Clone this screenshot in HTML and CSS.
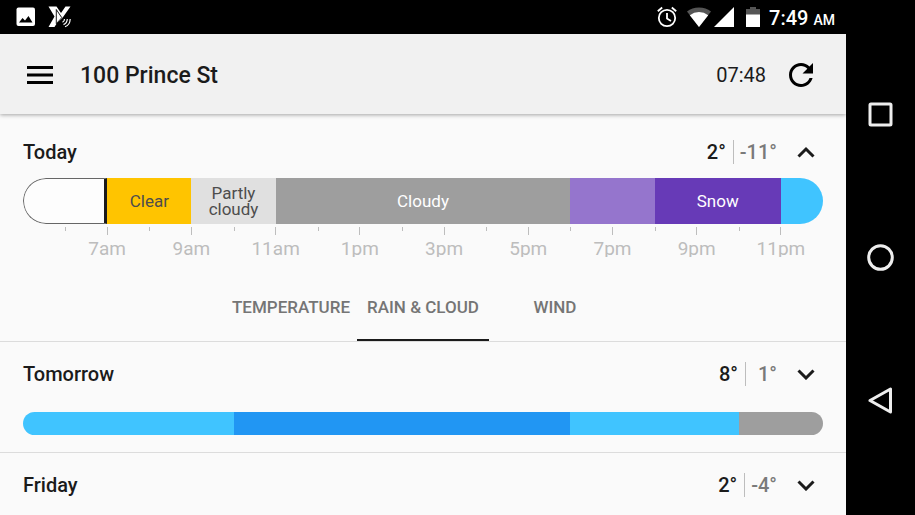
FILE: index.html
```
<!DOCTYPE html>
<html lang="en">
<head>
<meta charset="utf-8">
<title>Weather</title>
<meta name="viewport" content="width=device-width, initial-scale=1">
<link rel="stylesheet" href="styles.css">
</head>
<body>
<div class="device">
  <div class="screen">
    <div class="status">
      <div class="status-side">
        <svg viewBox="0 0 20 20" width="20" height="20" aria-hidden="true"><rect x=".5" y=".5" width="18.500" height="18.500" rx="2" fill="#fff"/><path d="M3 15.500 L6.500 11 L9 13.500 L12.500 9 L16.500 15.500 Z" fill="#000"/></svg>
        <svg viewBox="0 0 24 22" width="24" height="22" aria-hidden="true"><path d="M.5.500h8l4.500 6.500L17.500.5h5L14 12.500 9 17l-2.500 4H.5L6.500 10.500z" fill="#fff"/><path d="M8.300 3.500v14.200l5.500-6z" fill="#fff" stroke="#000" stroke-width=".9"/><path d="M14.500 16.300q2-1 2-3.300M15.500 18.600q3.500-1.200 3.800-5.600M17 20.800q5-1.800 5.200-7.800" fill="none" stroke="#fff" stroke-width="1.200"/></svg>
      </div>
      <div class="status-side status-right">
        <svg viewBox="0 0 22 22" width="22" height="22" aria-hidden="true"><g fill="none" stroke="#fff" stroke-width="1.800"><circle cx="11" cy="12" r="8.200"/><path d="M11 7v5.500l4 2.400M1.800 5.300l4.400-3.800M20.200 5.300l-4.400-3.800"/></g></svg>
        <svg class="icon-wifi" viewBox="0 0 24 20" width="24" height="20" aria-hidden="true"><path d="M0 4.500Q5 .500 12 .500T24 4.500L12 20z" fill="#555"/><path d="M2.800 8.200Q7 5 12 5T21.200 8.200L12 20z" fill="#fff"/></svg>
        <svg viewBox="0 0 20 20" width="20" height="20" aria-hidden="true"><path d="M20 0v20H0z" fill="#fff"/></svg>
        <svg class="icon-battery" viewBox="0 0 14 20" width="14" height="20" aria-hidden="true"><path d="M0 2h4V0h6v2h4v6H0z" fill="#555"/><path d="M0 7.500h14V20H0z" fill="#fff"/></svg>
        <span class="clock">7:49 <small>AM</small></span>
      </div>
    </div>
    <header class="toolbar">
      <button class="icon-button" aria-label="Menu"><svg viewBox="0 0 26 18" width="26" height="18"><path d="M0 1.500h26M0 9h26M0 16.500h26" stroke="#000" stroke-width="3"/></svg></button>
      <h1>100 Prince St</h1>
      <time class="updated">07:48</time>
      <button class="icon-button refresh" aria-label="Refresh"><svg viewBox="4 4 16 16" width="24" height="24"><path d="M17.650 6.350C16.200 4.900 14.210 4 12 4c-4.420 0-7.990 3.580-7.990 8s3.570 8 7.990 8c3.730 0 6.840-2.550 7.730-6h-2.080c-.82 2.330-3.040 4-5.650 4-3.310 0-6-2.690-6-6s2.690-6 6-6c1.660 0 3.140.69 4.220 1.780L13 11h7V4z"/></svg></button>
    </header>
    <main>
      <section class="day day-open">
        <div class="day-head">
          <h2>Today</h2>
          <span class="high">2°</span><span class="low">-11°</span>
          <button class="icon-button chevron" aria-label="Collapse Today"><svg viewBox="0 0 18 12" width="18" height="12"><path d="M1.500 10.500 9 3 16.500 10.500"/></svg></button>
        </div>
        <div class="bar bar-large">
          <div class="past span-2"></div>
          <div class="clear span-2">Clear</div>
          <div class="partly span-2">Partly cloudy</div>
          <div class="cloudy span-7">Cloudy</div>
          <div class="sleet span-2"></div>
          <div class="snow span-3">Snow</div>
          <div class="drizzle span-1"></div>
        </div>
        <ol class="axis">
          <li>7am</li><li>9am</li><li>11am</li><li>1pm</li><li>3pm</li><li>5pm</li><li>7pm</li><li>9pm</li><li>11pm</li>
        </ol>
        <nav class="tabs">
          <button>TEMPERATURE</button>
          <button class="active">RAIN &amp; CLOUD</button>
          <button>WIND</button>
        </nav>
      </section>
      <section class="day">
        <div class="day-head">
          <h2>Tomorrow</h2>
          <span class="high">8°</span><span class="low">1°</span>
          <button class="icon-button chevron" aria-label="Expand Tomorrow"><svg viewBox="0 0 18 12" width="18" height="12"><path d="M1.500 2.500 9 10 16.500 2.500"/></svg></button>
        </div>
        <div class="bar bar-small">
          <div class="drizzle span-5"></div>
          <div class="rain span-8"></div>
          <div class="drizzle span-4"></div>
          <div class="cloudy span-2"></div>
        </div>
      </section>
      <section class="day">
        <div class="day-head">
          <h2>Friday</h2>
          <span class="high">2°</span><span class="low">-4°</span>
          <button class="icon-button chevron" aria-label="Expand Friday"><svg viewBox="0 0 18 12" width="18" height="12"><path d="M1.500 2.500 9 10 16.500 2.500"/></svg></button>
        </div>
      </section>
    </main>
  </div>
  <nav class="system">
    <button class="icon-button" aria-label="Recent apps"><svg viewBox="0 0 28 28" width="28" height="28"><rect x="3" y="3" width="21" height="21" rx="1"/></svg></button>
    <button class="icon-button" aria-label="Home"><svg viewBox="0 0 28 28" width="28" height="28"><circle cx="13.500" cy="13.500" r="11.800"/></svg></button>
    <button class="icon-button" aria-label="Back"><svg viewBox="0 0 28 28" width="28" height="28"><path d="M23.500 2v23L3 13.500z"/></svg></button>
  </nav>
</div>
</body>
</html>
```
FILE: styles.css
```
* { box-sizing: border-box; }
body {
  margin: 0;
  background: #000;
  color: #1b1b1b;
  font-family: Roboto, sans-serif;
  overflow: hidden;
}
button {
  font: inherit;
  color: inherit;
  background: none;
  border: 0;
  padding: 0;
}
svg { display: block; }
h1, h2 { margin: 0; font-weight: 500; }
.device { display: flex; height: 100vh; }
.screen {
  flex: 1;
  display: flex;
  flex-direction: column;
  background: #fafafa;
  overflow: hidden;
}
.icon-button { display: flex; align-items: center; justify-content: center; }

.status {
  flex: none;
  display: flex;
  justify-content: space-between;
  height: 34px;
  padding: 0 11px 0 16px;
  background: #000;
  color: #fff;
}
.status-side { display: flex; align-items: center; gap: 12px; }
.status-right { gap: 3px; }
.icon-wifi { margin-left: 6px; }
.icon-battery { margin: 0 6px 0 9px; }
.clock { padding-top: 1px; font-size: 20px; font-weight: 500; word-spacing: 0; }
.clock small { font-size: 14px; }

.toolbar {
  flex: none;
  position: relative;
  display: flex;
  align-items: center;
  height: 80px;
  padding: 2px 33px 0 27px;
  background: #f1f1f1;
  box-shadow: 0 1px 4px rgba(0, 0, 0, .35);
}
.toolbar h1 { flex: 1; margin-left: 27px; font-size: 23px; }
.updated { font-size: 20px; }
.refresh { margin-left: 23px; }

.day { border-bottom: 1px solid #dcdcdc; }
.day-open { padding-top: 6px; }
.day-head {
  display: flex;
  align-items: center;
  height: 64px;
  padding: 0 31px 0 23px;
  font-size: 20px;
  font-weight: 500;
}
.day-head h2 { flex: 1; font-size: 20px; }
.low {
  height: 24px;
  min-width: 32px;
  margin-left: 7px;
  padding-left: 6px;
  border-left: 1px solid #bdbdbd;
  color: #7a7a7a;
  line-height: 24px;
  text-align: right;
}
.chevron { margin-left: 20px; }
.chevron path { fill: none; stroke: #1b1b1b; stroke-width: 3; }

.bar {
  display: grid;
  grid-template-columns: repeat(19, 1fr);
  margin: 0 23px;
  overflow: hidden;
}
.bar > div {
  display: flex;
  align-items: center;
  justify-content: center;
  text-align: center;
}
.bar-large {
  height: 46px;
  margin-top: -6px;
  border-radius: 23px;
  font-size: 17px;
  line-height: 16px;
}
.bar-small { height: 23px; margin-top: 6px; margin-bottom: 17px; border-radius: 12px; }
.span-1 { grid-column: span 1; }
.span-2 { grid-column: span 2; }
.span-3 { grid-column: span 3; }
.span-4 { grid-column: span 4; }
.span-5 { grid-column: span 5; }
.span-7 { grid-column: span 7; }
.span-8 { grid-column: span 8; }
.past {
  border: 1px solid #666;
  border-right: 3px solid #1b1b1b;
  border-radius: 23px 0 0 23px;
  background: #fdfdfd;
}
.clear { background: #ffc400; color: #4d4d4d; }
.partly { background: #e0e0e0; color: #4d4d4d; }
.cloudy { background: #9e9e9e; color: #fff; }
.sleet { background: #9575cd; }
.snow { background: #673ab7; color: #fff; }
.drizzle { background: #40c4ff; }
.rain { background: #2196f3; }

.axis {
  display: grid;
  grid-template-columns: repeat(19, 1fr);
  margin: 3px 23px 0;
  padding: 0;
  list-style: none;
  color: #bdbdbd;
  font-size: 19px;
}
.axis li {
  grid-column: span 2;
  height: 30px;
  padding-top: 10px;
  overflow: hidden;
  line-height: 24px;
  text-align: center;
  background:
    linear-gradient(#bdbdbd, #bdbdbd) left top / 1px 4px no-repeat,
    linear-gradient(#bdbdbd, #bdbdbd) center top / 1px 8px no-repeat;
}
.axis li:first-child { grid-column: 2 / span 2; }

.tabs {
  display: grid;
  grid-template-columns: repeat(3, 132px);
  justify-content: center;
  margin-top: 16px;
  color: #757575;
  font-size: 17px;
  font-weight: 500;
}
.tabs button { height: 68px; padding-top: 2px; border-bottom: 2px solid transparent; }
.tabs .active { border-color: #1b1b1b; }

.system {
  flex: none;
  display: flex;
  flex-direction: column;
  justify-content: center;
  gap: 115px;
  width: 69px;
  align-items: center;
}
.system svg { fill: none; stroke: #eee; stroke-width: 3; stroke-linejoin: round; }
```
